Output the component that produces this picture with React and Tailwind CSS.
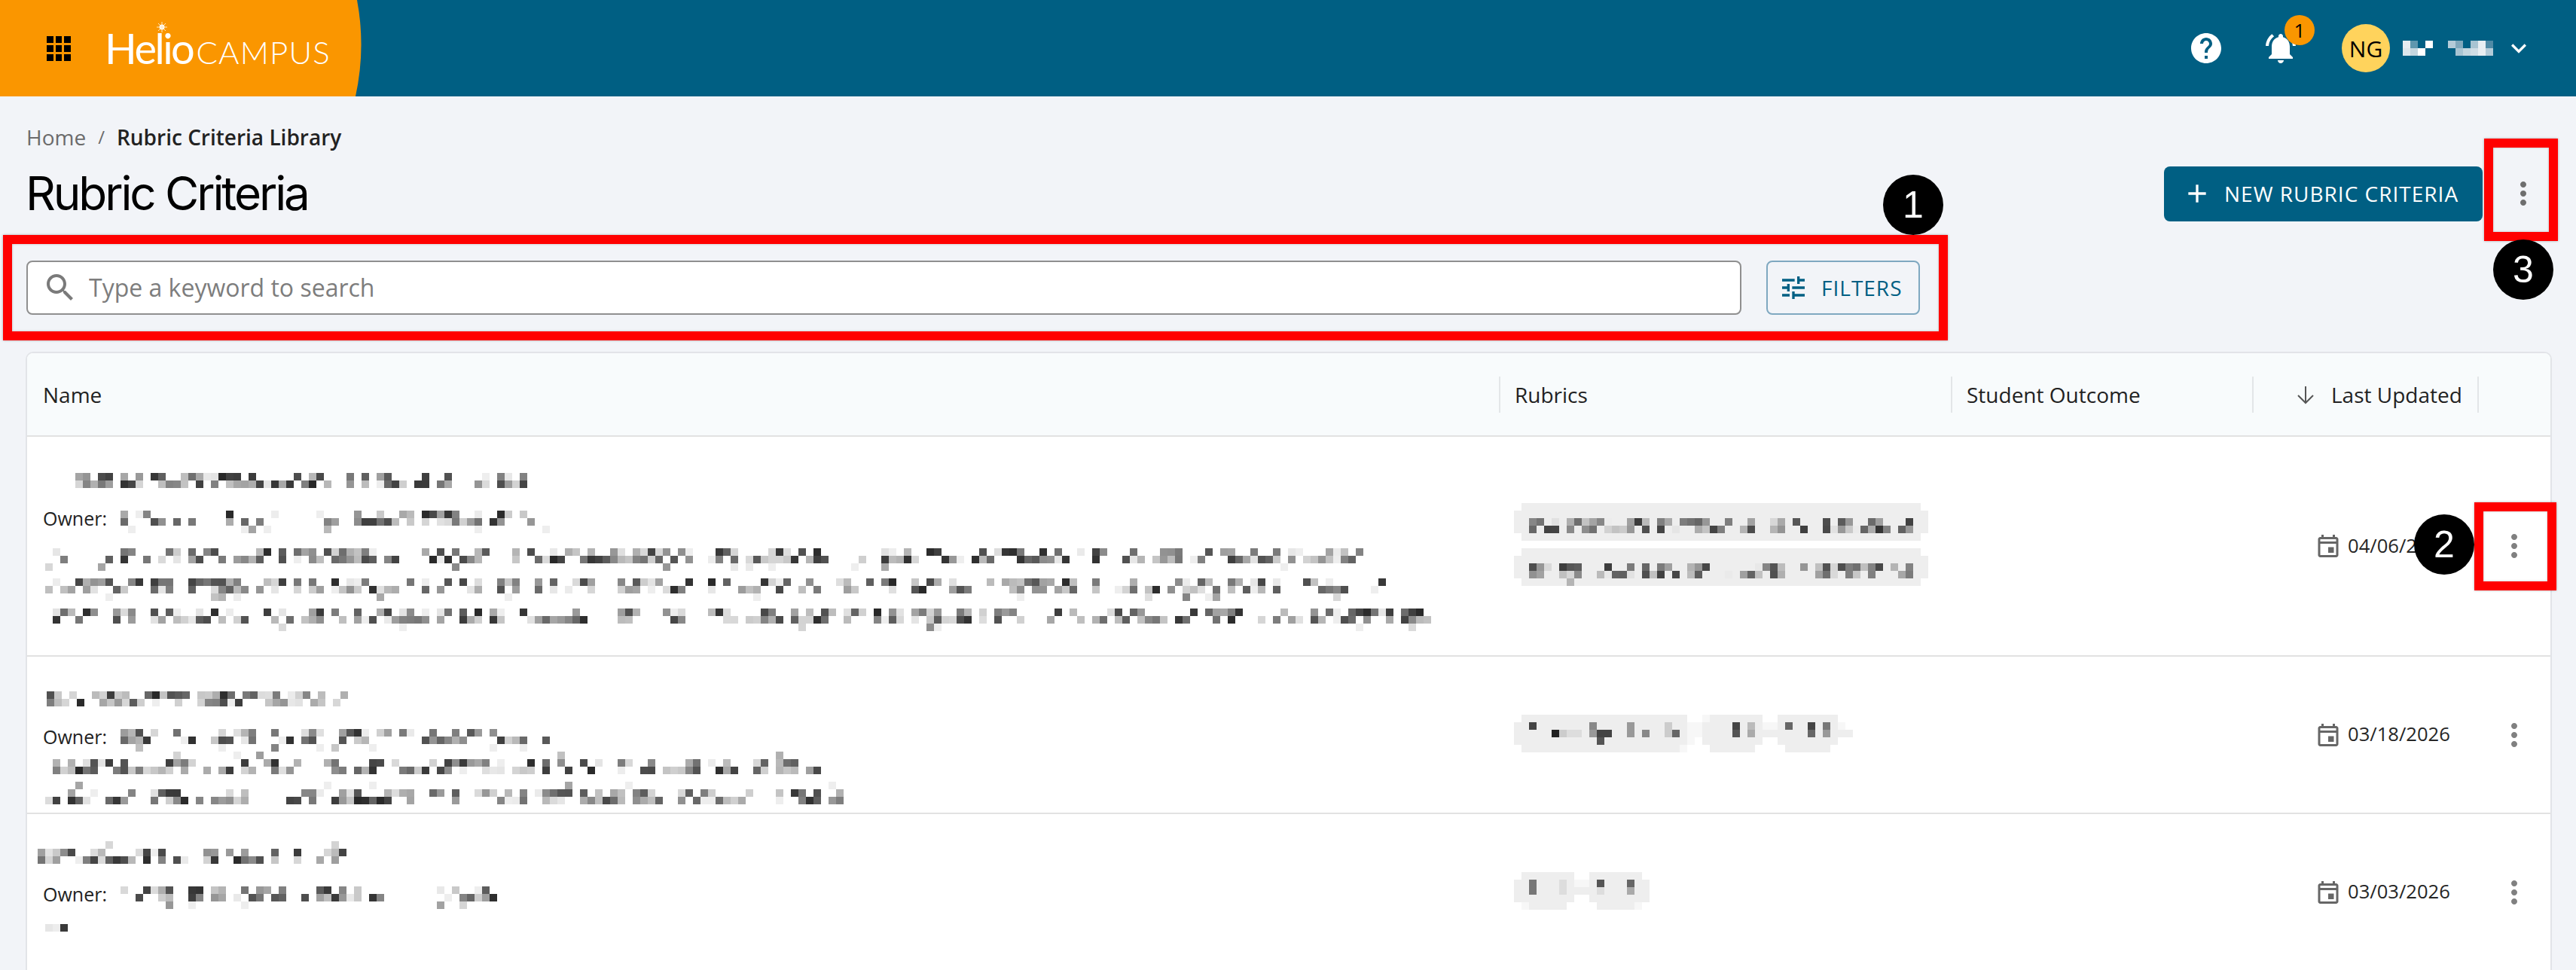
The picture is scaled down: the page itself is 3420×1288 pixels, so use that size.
import React from 'react';

const ROW_COLS = 'grid grid-cols-[1954px_600px_400px_299px_97px]';

const SHADES = { e: '#eeeeee', f: '#f7f7f7', 0: '#222222', 1: '#333333', 2: '#444444', 3: '#555555', 4: '#666666', 5: '#777777', 6: '#888888', 7: '#999999', 8: '#aaaaaa', 9: '#bbbbbb', a: '#cccccc', b: '#dddddd' };

// small seeded random so the pixelated text stays the same on every run
const makeRandom = seed => () => {
  seed = ( seed + 0x6d2b79f5 ) | 0;
  let t = Math.imul( seed ^ ( seed >>> 15 ), 1 | seed );
  t = ( t + Math.imul( t ^ ( t >>> 7 ), 61 | t ) ) ^ t;
  return ( ( t ^ ( t >>> 14 ) ) >>> 0 ) / 4294967296;
};

// a line of redacted text: rows of 10px cells
const blurLine = ( cols, seed, {ink = 0.55, base = 40, top = 1, bottom = 0} = {} ) => {
  const rand = makeRandom( seed );
  const rows = [];
  const total = top + 2 + bottom;
  for ( let r = 0; r < total; r++ ) rows.push( [] );
  let gap = 0;
  for ( let c = 0; c < cols; c++ ) {
    if ( gap > 0 ) {
      gap--;
      continue;
    }
    if ( rand() < 0.07 ) gap = 1 + Math.floor( rand() * 2 );
    for ( let r = 0; r < total; r++ ) {
      const isMain = r === total - 1 - bottom || r === total - 2 - bottom;
      const chance = isMain ? ( r === total - 1 - bottom ? ink + 0.12 : ink ) : 0.07;
      if ( rand() < chance ) {
        const v = Math.floor( base + rand() * 205 + ( isMain ? 0 : 90 ) );
        const g = Math.min( v, 238 );
        rows[ r ].push( [ c, `rgb(${g},${g},${g})` ] );
      }
    }
  }
  return rows;
};

const Mosaic = ( {rows, cols, className = ''} ) => (
  <svg width={cols * 10} height={rows.length * 10} shapeRendering="crispEdges" className={`block shrink-0 ${className}`}>
    {rows.map( ( row, r ) => row.map( ( [ c, fill ] ) => (
      <rect key={`${r}-${c}`} x={c * 10} y={r * 10} width="10" height="10" fill={fill} />
    ) ) )}
  </svg>
);

const fromStrings = lines => lines.map( line => [ ...line ].flatMap( ( ch, c ) => ( ch === ' ' ? [] : [ [ c, SHADES[ ch ] ] ] ) ) );

// chip with pixelated text, cols wide
const chipRows = ( cols, seed, withTail ) => {
  const textRows = blurLine( cols - 4, seed, {ink: 0.6, base: 50, top: 0, bottom: withTail ? 1 : 0} );
  const out = [];
  for ( let r = 0; r < 5; r++ ) {
    const row = [];
    const inset = r === 0 || r === 4 ? 1 : 0;
    for ( let c = inset; c < cols - inset; c++ ) row.push( [ c, '#eeeeee' ] );
    const t = textRows[ r - 2 ];
    if ( t ) t.forEach( ( [ c, fill ] ) => row.push( [ c + 2, fill ] ) );
    out.push( row );
  }
  return out;
};

const CHIPS_ROW2 = fromStrings( [
  ' eeeeeeeeeeeeeeeeeeeeee  feeeeeee  eeeeeeee',
  'ee2eeeeeee6eeee7eeeeaeeffeeee2e9effe4ee2e5ef',
  'eeeee0abbe722ee7e6eea4effeeee3e8eeeeeee4e7eee',
  'eeeeeeeeeee3eeeeeeeeeeef eeeeeeee  eeeeeeee',
  ' eeeeeeeeeeeeeeeeeeeeef   eeeeee    eeeeee',
] );

const CHIPS_ROW3 = fromStrings( [
  ' eeeeeee  eeeeeee',
  'ee5eeebeffe3eee4ee',
  'ee5eeebeeeebeee8ee',
  'eeeeeeee  eeeeeeee',
  ' feeeee    eeeeef',
] );

const MaterialIcon = ( {path, size = 48, className = ''} ) => (
  <svg width={size} height={size} viewBox="0 0 24 24" fill="currentColor" fillRule="evenodd" className={`shrink-0 ${className}`}>
    <path d={path} />
  </svg>
);

const ICONS = {
  search: 'M15.5 14h-.79l-.28-.27C15.41 12.59 16 11.11 16 9.5 16 5.91 13.09 3 9.5 3S3 5.91 3 9.5 5.91 16 9.5 16c1.61 0 3.09-.59 4.23-1.57l.27.28v.79l5 4.99L20.49 19l-4.99-5zm-6 0C7.01 14 5 11.99 5 9.5S7.01 5 9.5 5 14 7.01 14 9.5 11.99 14 9.5 14z',
  tune: 'M3 17v2h6v-2H3zM3 5v2h10V5H3zm10 16v-2h8v-2h-8v-2h-2v6h2zM7 9v2H3v2h4v2h2V9H7zm14 4v-2H11v2h10zm-6-4h2V7h4V5h-4V3h-2v6z',
  add: 'M19 13h-6v6h-2v-6H5v-2h6V5h2v6h6v2z',
  help: 'M12 2C6.48 2 2 6.48 2 12s4.48 10 10 10 10-4.48 10-10S17.52 2 12 2zm1 17h-2v-2h2v2zm2.07-7.75l-.9.92C13.45 12.9 13 13.5 13 15h-2v-.5c0-1.1.45-2.1 1.17-2.83l1.24-1.26c.37-.36.59-.86.59-1.41 0-1.1-.9-2-2-2s-2 .9-2 2H8c0-2.21 1.79-4 4-4s4 1.79 4 4c0 .88-.36 1.68-.93 2.25z',
  bell: 'M7.58 4.08 6.15 2.65C3.75 4.48 2.17 7.3 2.03 10.5h2c.15-2.65 1.51-4.97 3.55-6.42zm12.39 6.42h2c-.15-3.2-1.73-6.02-4.12-7.85l-1.42 1.43c2.02 1.45 3.39 3.77 3.54 6.42zM18 11c0-3.07-1.64-5.64-4.5-6.32V4c0-.83-.67-1.5-1.5-1.5s-1.5.67-1.5 1.5v.68C7.63 5.36 6 7.92 6 11v5l-2 2v1h16v-1l-2-2v-5zm-6 11c.14 0 .27-.01.4-.04.65-.14 1.18-.58 1.44-1.18.1-.24.15-.5.15-.78h-4c.01 1.1.9 2 2.01 2z',
  chevron: 'M16.59 8.59 12 13.17 7.41 8.59 6 10l6 6 6-6z',
  event: 'M19 4h-1V2h-2v2H8V2H6v2H5c-1.11 0-1.99.9-1.99 2L3 20c0 1.1.89 2 2 2h14c1.1 0 2-.9 2-2V6c0-1.1-.9-2-2-2zm0 16H5V10h14v10zm0-12H5V6h14v2zM12 13h5v5h-5z',
  more: 'M12 8c1.1 0 2-.9 2-2s-.9-2-2-2-2 .9-2 2 .9 2 2 2zm0 2c-1.1 0-2 .9-2 2s.9 2 2 2 2-.9 2-2-.9-2-2-2zm0 6c-1.1 0-2 .9-2 2s.9 2 2 2 2-.9 2-2-.9-2-2-2z',
};

const Header = () => (
  <header className="flex items-center justify-between h-[128px] bg-[#005f83]">
    <div className="relative flex items-center h-full w-[480px]">
      <svg width="480" height="128" className="absolute inset-0">
        <path d="M0 0H474Q486 64 472 128H0Z" fill="#fa9600" />
      </svg>
      <div className="relative grid grid-cols-3 gap-[3px] ml-[62px] w-[32px]">
        {[ 0, 1, 2, 3, 4, 5, 6, 7, 8 ].map( i => <span key={i} className="h-[9px] bg-black" /> )}
      </div>
      <div className="relative flex items-baseline ml-[45px] text-white font-['Lato',sans-serif] leading-none">
        <span className="text-[56px] font-normal tracking-[-2.5px]">Helio</span>
        <span className="text-[42px] font-light tracking-[1.2px] ml-[4px]">CAMPUS</span>
        <svg width="14" height="14" viewBox="0 0 14 14" className="absolute left-[69px] top-[-7px]">
          <circle cx="7" cy="7" r="3.5" fill="#ffffff" />
          <path d="M7 0V14M0 7H14M2 2L12 12M12 2L2 12" stroke="#ffe9c4" strokeWidth="1" />
        </svg>
      </div>
    </div>
    <div className="flex items-center pr-[56px] text-white">
      <MaterialIcon path={ICONS.help} />
      <div className="relative ml-[51px]">
        <MaterialIcon path={ICONS.bell} className="block" />
        <span className="absolute left-[29px] top-[-20px] flex items-center justify-center w-[40px] h-[40px] rounded-full bg-[#fa9600] text-black text-[26px] font-['Open_Sans',sans-serif]">1</span>
      </div>
      <span className="flex items-center justify-center ml-[57px] w-[64px] h-[64px] rounded-full bg-[#ffd35c] text-black text-[30px] font-['Open_Sans',sans-serif]">NG</span>
      <Mosaic
        cols={4}
        className="ml-[17px]"
        rows={[
          [ [ 0, '#e6ecf0' ], [ 1, '#5f97ae' ], [ 2, '#005f83' ], [ 3, '#ffffff' ] ],
          [ [ 0, '#dde6eb' ], [ 1, '#c4d6df' ], [ 2, '#ffffff' ], [ 3, '#005f83' ] ],
        ]}
      />
      <Mosaic
        cols={6}
        className="ml-[20px]"
        rows={[
          [ [ 0, '#b3cbd8' ], [ 1, '#80a8bc' ], [ 2, '#005f83' ], [ 3, '#a8c4d2' ], [ 4, '#e8eef2' ], [ 5, '#4f8aa5' ] ],
          [ [ 1, '#a8c4d2' ], [ 2, '#c4d6df' ], [ 3, '#cfdde5' ], [ 4, '#e8eef2' ], [ 5, '#b3cbd8' ] ],
        ]}
      />
      <MaterialIcon path={ICONS.chevron} size={40} className="ml-[14px]" />
    </div>
  </header>
);

const PageTitle = () => (
  <div className="flex items-center justify-between h-[90px] mt-[10px]">
    <h1 className="text-[62px] font-['Inter',sans-serif] font-normal tracking-[-3.1px] text-black leading-none">Rubric Criteria</h1>
    <div className="flex items-center">
      <button className="flex items-center h-[73px] w-[423px] pl-[24px] rounded-[8px] bg-[#005f83] text-white text-[28px] tracking-[1px]">
        <MaterialIcon path={ICONS.add} size={40} className="mr-[16px]" />
        NEW RUBRIC CRITERIA
      </button>
      <span className="ml-[30px] mr-[14px] text-[#6e6e6e]">
        <MaterialIcon path={ICONS.more} className="block" />
      </span>
    </div>
  </div>
);

const SearchBar = () => (
  <div className="flex items-center gap-[35px] w-[2515px] mt-[44px] pl-[1px]">
    <div className="flex flex-1 items-center h-[72px] pl-[19px] ml-0 mr-[-2px] rounded-[8px] border-2 border-[#8f8f8f] bg-white">
      <MaterialIcon path={ICONS.search} className="text-[#7a7a7a]" />
      <input
        className="flex-1 ml-[14px] bg-transparent outline-none text-[32px] placeholder:text-[#7d7d7d]"
        placeholder="Type a keyword to search"
        readOnly
      />
    </div>
    <button className="flex items-center h-[72px] w-[204px] pl-[14px] rounded-[8px] border-2 border-[#7fa8c0] text-[#005f83] text-[28px] tracking-[1px]">
      <MaterialIcon path={ICONS.tune} size={40} className="mr-[17px]" />
      FILTERS
    </button>
  </div>
);

const HeaderCell = ( {children, divider = true, className = ''} ) => (
  <div className={`flex items-center h-full ${className}`}>
    {divider && <span className="w-[2px] h-[48px] mr-[19px] bg-[#e3e6e8]" />}
    {children}
  </div>
);

const RowCells = ( {name, rubrics, date, height} ) => (
  <div className={`${ROW_COLS} ${height} border-b-2 border-[#e2e2e2] bg-white`}>
    <div>{name}</div>
    <div className="flex flex-col justify-center gap-[10px] pl-[20px] pb-[4px]">{rubrics}</div>
    <div />
    <div className="flex items-center pl-[83px] text-[25.6px] text-[#262626]">
      <MaterialIcon path={ICONS.event} size={36} className="mr-[8px] text-[#666666]" />
      {date}
    </div>
    <div className="flex items-center pl-[25px] text-[#808080]">
      <MaterialIcon path={ICONS.more} />
    </div>
  </div>
);

const Owner = ( {cols, seed, className = ''} ) => (
  <div className={`flex items-start h-[30px] pl-[21px] ${className}`}>
    <span className="w-[103px] h-[30px] leading-[20px] text-[25px] text-[#222222]">Owner:</span>
    <Mosaic cols={cols} rows={blurLine( cols, seed, {ink: 0.45, top: 0, bottom: 1} )} />
  </div>
);

const DataTable = () => (
  <div className="mt-[49px] rounded-t-[10px] border-2 border-[#e2e4e8] bg-white overflow-hidden">
    <div className={`${ROW_COLS} h-[111px] border-b-2 border-[#e2e2e2] bg-[#f8fbfc] text-[28px] text-[#222222]`}>
      <HeaderCell divider={false} className="pl-[21px]">Name</HeaderCell>
      <HeaderCell>Rubrics</HeaderCell>
      <HeaderCell>Student Outcome</HeaderCell>
      <HeaderCell divider={false} className="pl-0">
        <span className="w-[2px] h-[48px] bg-[#e3e6e8]" />
        <svg width="28" height="28" viewBox="0 0 28 28" fill="none" stroke="#555555" strokeWidth="2" className="ml-[55px] mr-[20px]">
          <path d="M14 3V25M4 15L14 25L24 15" />
        </svg>
        Last Updated
      </HeaderCell>
      <HeaderCell><span /></HeaderCell>
    </div>

    <RowCells
      height="h-[292px]"
      date="04/06/2026"
      name={(
        <div className="pt-[48px]">
          <Mosaic cols={60} className="ml-[64px]" rows={blurLine( 60, 11, {ink: 0.6, top: 0} )} />
          <Owner cols={57} seed={23} className="mt-[30px]" />
          <div className="flex flex-col gap-[10px] mt-[20px] pl-[24px]">
            <Mosaic cols={175} rows={blurLine( 175, 31, {ink: 0.5, top: 0, bottom: 1} )} />
            <Mosaic cols={178} rows={blurLine( 178, 37, {ink: 0.5, top: 0, bottom: 1} )} />
            <Mosaic cols={185} rows={blurLine( 185, 41, {ink: 0.5, top: 0, bottom: 1} )} />
          </div>
        </div>
      )}
      rubrics={(
        <>
          <Mosaic cols={55} rows={chipRows( 55, 51, false )} />
          <Mosaic cols={55} rows={chipRows( 55, 57, true )} />
        </>
      )}
    />

    <RowCells
      height="h-[209px]"
      date="03/18/2026"
      name={(
        <div className="pt-[46px]">
          <Mosaic cols={41} className="ml-[16px]" rows={blurLine( 41, 61, {ink: 0.6, top: 0} )} />
          <Owner cols={57} seed={67} className="mt-[30px]" />
          <div className="flex flex-col gap-[10px] pl-[24px]">
            <Mosaic cols={103} rows={blurLine( 103, 71, {ink: 0.52} )} />
            <Mosaic cols={106} rows={blurLine( 106, 73, {ink: 0.52} )} />
          </div>
        </div>
      )}
      rubrics={<Mosaic cols={45} rows={CHIPS_ROW2} />}
    />

    <RowCells
      height="h-[209px]"
      date="03/03/2026"
      name={(
        <div className="pt-[36px]">
          <Mosaic cols={41} className="ml-[14px]" rows={blurLine( 41, 83, {ink: 0.62} )} />
          <Owner cols={50} seed={89} className="mt-[30px]" />
          <div className="mt-[20px] pl-[24px]">
            <Mosaic cols={3} rows={[ [ [ 0, '#e6e6e6' ], [ 1, '#ededed' ], [ 2, '#3a3a3a' ] ] ]} />
          </div>
        </div>
      )}
      rubrics={<Mosaic cols={18} rows={CHIPS_ROW3} />}
    />
  </div>
);

const RedBox = ( {className} ) => (
  <div className={`absolute border-solid border-[#ff0000] shadow-[0_0_3px_rgba(0,0,0,0.3),inset_0_0_3px_rgba(0,0,0,0.25)] ${className}`} />
);

const Badge = ( {n, className} ) => (
  <div className={`absolute flex items-center justify-center w-[80px] h-[80px] rounded-full bg-black text-white text-[50px] leading-none font-['Liberation_Sans',sans-serif] ${className}`}>
    {n}
  </div>
);

export default function App() {
  return (
    <div className="relative w-[3420px] h-[1288px] overflow-hidden bg-[#f2f4f8] font-['Open_Sans',sans-serif]">
      <Header />
      <main className="pl-[34px] pr-[32px]">
        <nav className="flex items-center h-[40px] mt-[34px] pl-[1px] text-[28px]">
          <span className="text-[#6b6b6b]">Home</span>
          <span className="mx-[16px] text-[#6b6b6b] text-[24px]">/</span>
          <span className="font-semibold text-[#222222]">Rubric Criteria Library</span>
        </nav>
        <PageTitle />
        <SearchBar />
        <DataTable />
      </main>

      {/* annotations drawn over the page */}
      <RedBox className="left-[4px] top-[312px] w-[2582px] h-[140px] border-[12px]" />
      <RedBox className="left-[3285px] top-[667px] w-[109px] h-[117px] border-[12px]" />
      <RedBox className="left-[3298px] top-[184px] w-[98px] h-[136px] border-[12px]" />
      <Badge n="1" className="left-[2500px] top-[232px]" />
      <Badge n="2" className="left-[3205px] top-[683px]" />
      <Badge n="3" className="left-[3310px] top-[318px]" />
    </div>
  );
}
